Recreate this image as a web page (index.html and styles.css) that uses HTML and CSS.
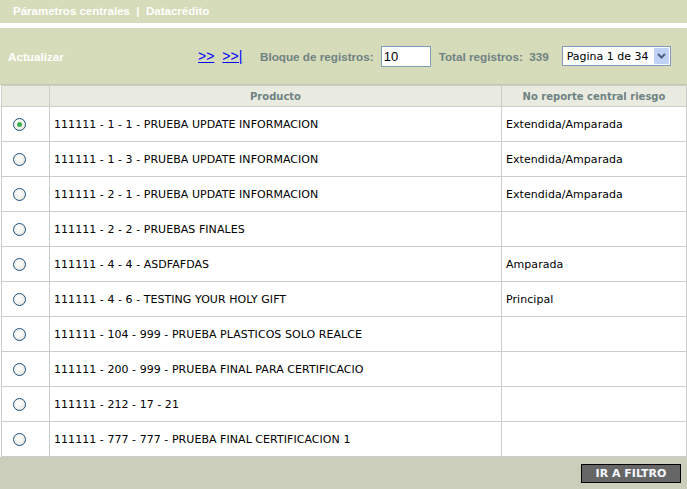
FILE: index.html
```html
<!DOCTYPE html>
<html>
<head>
<meta charset="utf-8">
<link rel="stylesheet" href="styles.css">
</head>
<body>
<div class="titlebar">Párametros centrales &nbsp;|&nbsp; Datacrédito</div>
<div class="toolbar">
  <span class="refresh">Actualizar</span>
  <span class="nav"><a href="#">&gt;&gt;</a><a href="#" class="last">&gt;&gt;|</a></span>
  <span class="label">Bloque de registros:</span>
  <input class="block" type="text" value="10">
  <span class="label total">Total registros:&nbsp; 339</span>
  <div class="select"><span>Pagina 1 de 34</span><span class="arrow"><svg width="9" height="6" viewBox="0 0 9 6"><path d="M1 1 L4.5 4.5 L8 1" fill="none" stroke="#4d6185" stroke-width="2"/></svg></span></div>
</div>
<table class="grid">
  <thead>
    <tr><th class="c1"></th><th class="c2">Producto</th><th class="c3">No reporte central riesgo</th></tr>
  </thead>
  <tbody>
    <tr><td class="c1"><span class="radio on"></span></td><td>111111 - 1 - 1 - PRUEBA UPDATE INFORMACION</td><td>Extendida/Amparada</td></tr>
    <tr><td class="c1"><span class="radio"></span></td><td>111111 - 1 - 3 - PRUEBA UPDATE INFORMACION</td><td>Extendida/Amparada</td></tr>
    <tr><td class="c1"><span class="radio"></span></td><td>111111 - 2 - 1 - PRUEBA UPDATE INFORMACION</td><td>Extendida/Amparada</td></tr>
    <tr><td class="c1"><span class="radio"></span></td><td>111111 - 2 - 2 - PRUEBAS FINALES</td><td></td></tr>
    <tr><td class="c1"><span class="radio"></span></td><td>111111 - 4 - 4 - ASDFAFDAS</td><td>Amparada</td></tr>
    <tr><td class="c1"><span class="radio"></span></td><td>111111 - 4 - 6 - TESTING YOUR HOLY GIFT</td><td>Principal</td></tr>
    <tr><td class="c1"><span class="radio"></span></td><td>111111 - 104 - 999 - PRUEBA PLASTICOS SOLO REALCE</td><td></td></tr>
    <tr><td class="c1"><span class="radio"></span></td><td>111111 - 200 - 999 - PRUEBA FINAL PARA CERTIFICACIO</td><td></td></tr>
    <tr><td class="c1"><span class="radio"></span></td><td>111111 - 212 - 17 - 21</td><td></td></tr>
    <tr><td class="c1"><span class="radio"></span></td><td>111111 - 777 - 777 - PRUEBA FINAL CERTIFICACION 1</td><td></td></tr>
  </tbody>
</table>
<div class="footer"><button class="btn">IR A FILTRO</button></div>
</body>
</html>
```
FILE: styles.css
```css
html, body { margin: 0; padding: 0; background: #fff; }
body { width: 687px; height: 489px; overflow: hidden; font-family: "DejaVu Sans", Verdana, sans-serif; }
.titlebar {
  height: 23px; line-height: 23px; background: #d6dbb9; color: #fff;
  font-family: "Liberation Sans", Arial, sans-serif; font-weight: bold; font-size: 11.5px;
  padding-left: 13px; margin-bottom: 5px;
}
.toolbar {
  height: 56px; background: #d6dbb9; display: flex; align-items: center;
  font-family: "Liberation Sans", Arial, sans-serif; font-weight: bold; font-size: 11.7px;
  border-bottom: 1px solid #c5c9b0;
}
.refresh { color: #fff; padding-left: 8px; width: 190px; }
.nav { display: flex; gap: 8px; font-size: 14px; font-weight: normal; width: 62px; }
.nav a { color: #0000ff; text-decoration: underline; }
.label { color: #6e8283; }
.block {
  margin-left: 7px; width: 44px; height: 17px; padding: 1px 2px; border: 1px solid #7f9db9;
  font-family: "Liberation Sans", Arial, sans-serif; font-size: 13px; box-sizing: content-box;
}
.total { margin-left: 8px; width: 123px; }
.select {
  width: 107px; height: 18px; border: 1px solid #7f9db9; background: #fff;
  display: flex; align-items: center; justify-content: space-between;
  font-family: "DejaVu Sans", sans-serif; font-weight: normal; font-size: 11px; color: #000;
}
.select span:first-child { padding-left: 4px; }
.arrow {
  width: 15px; height: 16px; margin-right: 1px; background: #c1d2f7;
  display: flex; align-items: center; justify-content: center; border-radius: 1px;
}
.grid {
  border-collapse: collapse; width: 686px; margin-left: 1px; background: #fff;
  font-size: 11px; color: #000;
}
.grid th {
  height: 20px; background: #e9ebe0; color: #6e8283; font-size: 10px; font-weight: bold;
  border: 1px solid #cccccc; padding: 0;
}
.grid td { height: 34px; border: 1px solid #cccccc; padding: 0 0 0 4px; letter-spacing: 0.05px; }
.grid td.c1 { padding: 0 0 0 11px; text-align: left; width: 36px; }
.grid th.c1 { width: 47px; }
.grid th.c2 { width: 451px; }
.radio {
  display: inline-block; width: 11px; height: 11px; border-radius: 50%;
  border: 1px solid #1c5180; background: radial-gradient(circle at 40% 40%, #fff 0%, #f2f2ee 50%, #d8d8d0 100%);
  vertical-align: middle; position: relative;
}
.radio.on::after {
  content: ""; position: absolute; left: 3px; top: 3px; width: 5px; height: 5px; border-radius: 50%;
  background: #3bb34a;
}
.footer {
  height: 32px; background: #cbcebb; display: flex; justify-content: flex-end; align-items: center;
  padding-right: 6px;
}
.btn {
  width: 100px; height: 19px; background: #666666; border: 1px solid #000;
  color: #f4f8ff; font-family: "DejaVu Sans", sans-serif; font-weight: bold; font-size: 11px;
  padding: 0; margin-top: 1px;
}
```
